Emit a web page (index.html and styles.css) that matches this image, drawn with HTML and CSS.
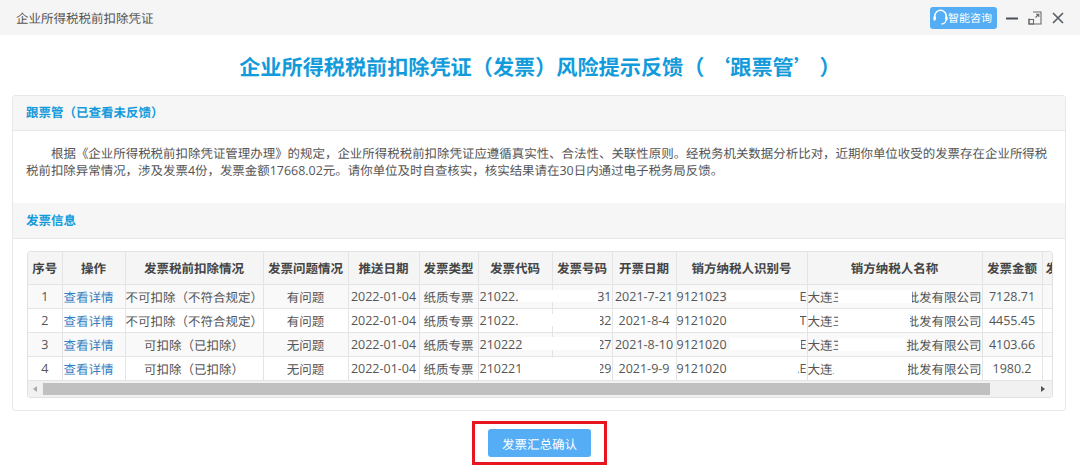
FILE: index.html
```html
<!DOCTYPE html>
<html lang="zh-CN">
<head>
<meta charset="utf-8">
<title>企业所得税税前扣除凭证</title>
<link rel="stylesheet" href="styles.css">
</head>
<body>
<header class="topbar">
  <span class="win-title">企业所得税税前扣除凭证</span>
  <div class="win-tools">
    <a class="consult">
      <svg class="headset" viewBox="0 0 15 17" width="15" height="17"><path d="M1.8 10V7a5.7 5.7 0 0 1 11.4 0v3" fill="none" stroke="#fff" stroke-width="1.5"/><path d="M13 11c-.3 2.6-2 3.8-4.5 4" fill="none" stroke="#fff" stroke-width="1.3"/><rect x="0.4" y="7.2" width="2.4" height="4.4" rx="1" fill="#fff"/><rect x="12.2" y="7.2" width="2.4" height="4.4" rx="1" fill="#fff"/></svg>
      <span>智能咨询</span>
    </a>
    <svg class="tool-icon" viewBox="0 0 14 14" width="14" height="14"><path d="M1 7.5h12" stroke="#4a4f5c" stroke-width="2"/></svg>
    <svg class="tool-icon" viewBox="0 0 14 14" width="14" height="14"><path d="M5 1h8v12h-12v-5.5M7.5 6.5l3-3M8 3.2h2.8v2.8" fill="none" stroke="#6a6a6a" stroke-width="1.1"/><rect x="1" y="8.5" width="4.5" height="4.5" fill="none" stroke="#6a6a6a" stroke-width="1.1"/></svg>
    <svg class="tool-icon" viewBox="0 0 14 14" width="14" height="14"><path d="M2 2l10 10M12 2l-10 10" stroke="#5a5f6a" stroke-width="1.7"/></svg>
  </div>
</header>

<h1 class="page-title">企业所得税税前扣除凭证（发票）风险提示反馈（ ‘跟票管’ ）</h1>

<main class="card">
  <h2 class="section-head">跟票管（已查看未反馈）</h2>
  <p class="notice">根据《企业所得税税前扣除凭证管理办理》的规定，企业所得税税前扣除凭证应遵循真实性、合法性、关联性原则。经税务机关数据分析比对，近期你单位收受的发票存在企业所得税税前扣除异常情况，涉及发票4份，发票金额17668.02元。请你单位及时自查核实，核实结果请在30日内通过电子税务局反馈。</p>
  <h2 class="section-head second">发票信息</h2>
  <div class="grid-wrap">
    <div class="grid-clip">
      <table class="grid">
        <colgroup>
          <col class="c1"><col class="c2"><col class="c3"><col class="c4"><col class="c5"><col class="c6"><col class="c7"><col class="c8"><col class="c9"><col class="c10"><col class="c11"><col class="c12"><col class="c13">
        </colgroup>
        <thead>
          <tr><th>序号</th><th>操作</th><th>发票税前扣除情况</th><th>发票问题情况</th><th>推送日期</th><th>发票类型</th><th>发票代码</th><th>发票号码</th><th>开票日期</th><th>销方纳税人识别号</th><th>销方纳税人名称</th><th>发票金额</th><th class="clip">发票状态</th></tr>
        </thead>
        <tbody>
          <tr><td>1</td><td class="link">查看详情</td><td>不可扣除（不符合规定）</td><td>有问题</td><td>2022-01-04</td><td>纸质专票</td><td class="left">21022.</td><td class="right">31</td><td>2021-7-21</td><td class="split"><span>9121023</span><span>E</span></td><td class="split"><span>大连三</span><span>批发有限公司</span></td><td>7128.71</td><td></td></tr>
          <tr><td>2</td><td class="link">查看详情</td><td>不可扣除（不符合规定）</td><td>有问题</td><td>2022-01-04</td><td>纸质专票</td><td class="left">21022.</td><td class="right">32</td><td>2021-8-4</td><td class="split"><span>9121020</span><span>T</span></td><td class="split"><span>大连三</span><span>批发有限公司</span></td><td>4455.45</td><td></td></tr>
          <tr><td>3</td><td class="link">查看详情</td><td>可扣除（已扣除）</td><td>无问题</td><td>2022-01-04</td><td>纸质专票</td><td class="left">210222</td><td class="right">27</td><td>2021-8-10</td><td class="split"><span>9121020</span><span>E</span></td><td class="split"><span>大连三</span><span>批发有限公司</span></td><td>4103.66</td><td></td></tr>
          <tr><td>4</td><td class="link">查看详情</td><td>可扣除（已扣除）</td><td>无问题</td><td>2022-01-04</td><td>纸质专票</td><td class="left">210221</td><td class="right">29</td><td>2021-9-9</td><td class="split"><span>9121020</span><span>.E</span></td><td class="split"><span>大连三</span><span>批发有限公司</span></td><td>1980.2</td><td></td></tr>
        </tbody>
      </table>
      <i class="patch p1"></i><i class="patch p2"></i><i class="patch p3"></i><i class="patch p4"></i>
      <i class="patch p5"></i><i class="patch p6"></i><i class="patch p7"></i><i class="patch p8"></i>
      <i class="patch p9"></i><i class="patch p10"></i><i class="patch p11"></i><i class="patch p12"></i>
    </div>
    <div class="scrollbar">
      <span class="arrow-left"></span>
      <span class="thumb"></span>
      <span class="arrow-right"></span>
    </div>
  </div>
</main>

<footer class="actions">
  <div class="highlight"><button class="confirm">发票汇总确认</button></div>
</footer>
</body>
</html>
```
FILE: styles.css
```css
* { box-sizing: border-box; }
html, body { margin: 0; padding: 0; }
body {
  width: 1080px;
  height: 473px;
  overflow: hidden;
  background: #fff;
  font-family: "Open Sans", "Noto Sans CJK TC", sans-serif;
  text-rendering: geometricPrecision;
  color: #555;
}
.topbar {
  height: 35px;
  background: #f5f5f5;
  display: flex;
  align-items: center;
  justify-content: space-between;
  padding: 0 15px 0 16px;
}
.win-title { font-size: 12.5px; color: #555; }
.win-tools { display: flex; align-items: center; gap: 9px; }
.consult {
  width: 67px;
  height: 22px;
  background: #55aef5;
  border-radius: 3px;
  color: #fff;
  font-size: 11px;
  display: flex;
  align-items: center;
  margin-right: -1px;
  padding-left: 3px;
}
.headset { flex: none; }
.tool-icon { flex: none; }
.page-title {
  margin: 0;
  height: 60px;
  line-height: 63px;
  text-align: center;
  font-family: "Noto Sans CJK TC", sans-serif;
  font-size: 21.15px;
  font-weight: 700;
  color: #129bdb;
}
.card {
  margin: 0 14px 0 12px;
  height: 316px;
  border: 1px solid #e8e8e8;
  border-radius: 3px;
}
.section-head {
  margin: 0;
  height: 35px;
  line-height: 34px;
  padding-left: 13px;
  font-size: 12.5px;
  font-weight: 700;
  color: #129bdb;
  background: #f6f6f6;
  border-bottom: 1px solid #e6e6e6;
}
.section-head.second { height: 36px; line-height: 35px; }
.notice {
  margin: 0;
  height: 72px;
  padding: 14px 12px 0 13px;
  font-size: 12.46px;
  line-height: 17px;
  text-indent: 25px;
  color: #555;
}
.grid-wrap {
  margin: 12px 13px 0 14px;
  width: 1026px;
  height: 147px;
  border: 1px solid #e2e2e2;
  border-radius: 3px;
  overflow: hidden;
}
.grid-clip {
  position: relative;
  height: 129px;
  overflow: hidden;
}
.grid {
  table-layout: fixed;
  border-collapse: collapse;
  width: 1074px;
  font-size: 12.5px;
  color: #555;
}
.c1 { width: 34px; } .c2 { width: 63px; } .c3 { width: 138px; } .c4 { width: 85px; }
.c5 { width: 71px; } .c6 { width: 59px; } .c7 { width: 74px; } .c8 { width: 60px; }
.c9 { width: 64px; } .c10 { width: 131px; } .c11 { width: 175px; } .c12 { width: 60px; } .c13 { width: 60px; }
.grid th {
  height: 32px;
  padding: 0;
  background: #f5f5f5;
  font-weight: 700;
  color: #444;
  border-right: 1px solid #e4e4e4;
  border-bottom: 1px solid #e4e4e4;
  white-space: nowrap;
  overflow: hidden;
}
.grid th.clip { text-align: left; padding-left: 3px; }
.grid td {
  height: 24px;
  padding: 0;
  text-align: center;
  border-right: 1px solid #e4e4e4;
  border-bottom: 1px solid #e4e4e4;
  white-space: nowrap;
  overflow: hidden;
}
.grid tbody tr:nth-child(odd) td { background: #f9f9f9; }
.grid td.link { color: #2f80c4; text-align: left; padding-left: 1px; }
.grid td.left { text-align: left; padding-left: 1px; }
.grid td.right { text-align: right; }
.grid td.split span:first-child { float: left; }
.grid td.split span:last-child { float: right; }
.patch { position: absolute; background: #fff; display: block; }
.p1 { left: 490px; top: 38px; width: 80px; height: 12px; }
.p2 { left: 490px; top: 62px; width: 82px; height: 12px; }
.p3 { left: 494px; top: 85px; width: 78px; height: 13px; }
.p4 { left: 494px; top: 106px; width: 78px; height: 22px; }
.p5 { left: 699px; top: 38px; width: 73px; height: 12px; }
.p6 { left: 699px; top: 62px; width: 73px; height: 12px; }
.p7 { left: 702px; top: 86px; width: 71px; height: 12px; }
.p8 { left: 700px; top: 109px; width: 70px; height: 18px; }
.p9 { left: 810px; top: 38px; width: 74px; height: 13px; }
.p10 { left: 810px; top: 62px; width: 72px; height: 13px; }
.p11 { left: 810px; top: 86px; width: 67px; height: 13px; }
.p12 { left: 806px; top: 109px; width: 74px; height: 18px; }
.scrollbar {
  height: 16px;
  background: #f1f1f1;
  display: flex;
  align-items: center;
}
.arrow-left, .arrow-right { width: 0; height: 0; border-style: solid; flex: none; }
.arrow-left { border-width: 3px 4px 3px 0; border-color: transparent #aaa transparent transparent; margin: 0 6px 0 5px; }
.arrow-right { border-width: 3px 0 3px 4px; border-color: transparent transparent transparent #555; margin-left: 51px; }
.thumb { width: 947px; height: 12px; background: #c0c0c0; flex: none; }
.actions {
  display: flex;
  justify-content: center;
  padding: 10px 0 0 0;
}
.highlight {
  margin-left: -1px;
  width: 135px;
  height: 44px;
  border: 3px solid #e8141f;
  display: flex;
  align-items: center;
  justify-content: center;
}
.confirm {
  width: 103px;
  height: 28px;
  border: 0;
  padding: 0;
  border-radius: 3px;
  background: #55aef5;
  color: #fff;
  font-family: inherit;
  text-rendering: inherit;
  font-size: 12.5px;
}
```
